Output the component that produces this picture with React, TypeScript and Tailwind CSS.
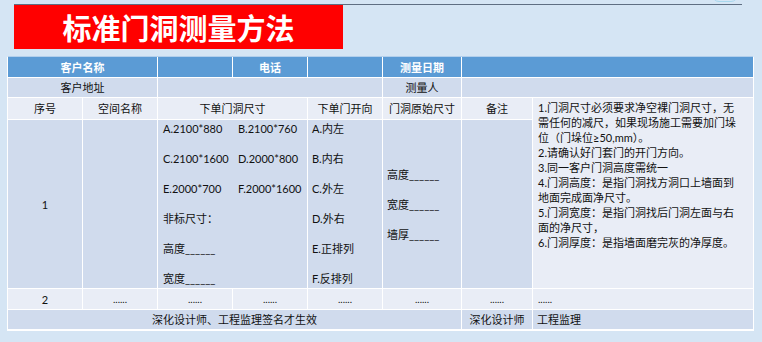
import React from "react";

const FONT = { fontFamily: '"Lato", "Noto Sans CJK SC", sans-serif' };

const sizes = [
  ["A.2100*880", "B.2100*760"],
  ["C.2100*1600", "D.2000*800"],
  ["E.2000*700", "F.2000*1600"],
];

const directions = ["A.内左", "B.内右", "C.外左", "D.外右", "E.正排列", "F.反排列"];

const notes = [
  "1.门洞尺寸必须要求净空裸门洞尺寸，无",
  "需任何的减尺，如果现场施工需要加门垛",
  "位（门垛位≥50,mm）。",
  "2.请确认好门套门的开门方向。",
  "3.同一客户门洞高度需统一",
  "4.门洞高度：是指门洞找方洞口上墙面到",
  "地面完成面净尺寸。",
  "5.门洞宽度：是指门洞找后门洞左面与右",
  "面的净尺寸，",
  "6.门洞厚度：是指墙面磨完灰的净厚度。",
];

const dark = "bg-[#d0dbed]";
const light = "bg-[#e9edf6]";
const head = "bg-[#5b9bd5] text-white font-bold flex items-center justify-center";

export default function App() {
  return (
    <div
      className="relative w-[762px] h-[342px] overflow-hidden bg-[#d5e5f4] text-[11px] leading-[15px] text-[#111]"
      style={FONT}
    >
      {/* top rule + small arc */}
      <div className="absolute left-[712px] top-[-12px] w-[26px] h-[14px] rounded-full border border-[#a8d8ee]" />
      <div className="ml-[14px] mt-[4px] w-[728px] h-px bg-[#5f6e82]" />

      {/* Title */}
      <div className="ml-[14px] w-[329px] h-[44px] bg-[#ff0000] flex items-center justify-center">
        <span className="text-white font-bold text-[29px] leading-none" style={{ fontFamily: '"Noto Sans CJK SC", sans-serif' }}>
          标准门洞测量方法
        </span>
      </div>

      {/* Table */}
      <div className="ml-[7px] mt-[7px] w-fit grid grid-cols-[74px_74px_74px_74px_74px_78px_70px_220px] grid-rows-[20px_19px_21px_168px_20px_19px] gap-px bg-white border-x border-t border-b-2 border-white border-t-[#b2cfec]">
        {/* row 1 */}
        <div className={`${head} col-span-2`}>客户名称</div>
        <div className={head} />
        <div className={head}>电话</div>
        <div className={head} />
        <div className={head}>测量日期</div>
        <div className={`${head} col-span-2`} />

        {/* row 2 */}
        <div className={`${dark} col-span-2 flex items-center justify-center`}>客户地址</div>
        <div className={`${dark} col-span-3`} />
        <div className={`${dark} flex items-center justify-center`}>测量人</div>
        <div className={`${dark} col-span-2`} />

        {/* row 3 */}
        <div className={`${light} flex items-center justify-center`}>序号</div>
        <div className={`${light} flex items-center justify-center`}>空间名称</div>
        <div className={`${light} col-span-2 flex items-center justify-center`}>下单门洞尺寸</div>
        <div className={`${light} flex items-center justify-center`}>下单门开向</div>
        <div className={`${light} flex items-center justify-center`}>门洞原始尺寸</div>
        <div className={`${light} flex items-center justify-center`}>备注</div>
        <div className={`${light} row-span-2 pl-[5px] pt-[2px] whitespace-nowrap`}>
          {notes.map((line) => (
            <div key={line}>{line}</div>
          ))}
        </div>

        {/* row 4 */}
        <div className={`${dark} flex items-center justify-center`}>1</div>
        <div className={dark} />
        <div className={`${dark} col-span-2 pt-px flex flex-col gap-[15px] whitespace-nowrap`}>
          {sizes.map(([a, b]) => (
            <div key={a} className="grid grid-cols-[75px_74px]">
              <span className="pl-[5px]">{a}</span>
              <span className="pl-[5px]">{b}</span>
            </div>
          ))}
          <div className="pl-[5px]">非标尺寸：</div>
          <div className="pl-[5px]">高度______</div>
          <div className="pl-[5px]">宽度______</div>
        </div>
        <div className={`${dark} pt-px pl-[4px] flex flex-col gap-[15px]`}>
          {directions.map((d) => (
            <div key={d}>{d}</div>
          ))}
        </div>
        <div className={`${dark} pl-[4px] flex flex-col justify-center gap-[15px]`}>
          <div>高度______</div>
          <div>宽度______</div>
          <div>墙厚______</div>
        </div>
        <div className={dark} />

        {/* row 5 */}
        <div className={`${light} flex items-center justify-center`}>2</div>
        {[0, 1, 2, 3, 4, 5].map((i) => (
          <div key={i} className={`${light} flex items-center justify-center text-[10px]`}>
            ......
          </div>
        ))}
        <div className={`${light} flex items-center pl-[5px] text-[10px]`}>......</div>

        {/* row 6 */}
        <div className={`${dark} col-span-6 flex items-center justify-center`}>深化设计师、工程监理签名才生效</div>
        <div className={`${dark} flex items-center justify-center`}>深化设计师</div>
        <div className={`${dark} flex items-center pl-[4px]`}>工程监理</div>
      </div>
    </div>
  );
}
